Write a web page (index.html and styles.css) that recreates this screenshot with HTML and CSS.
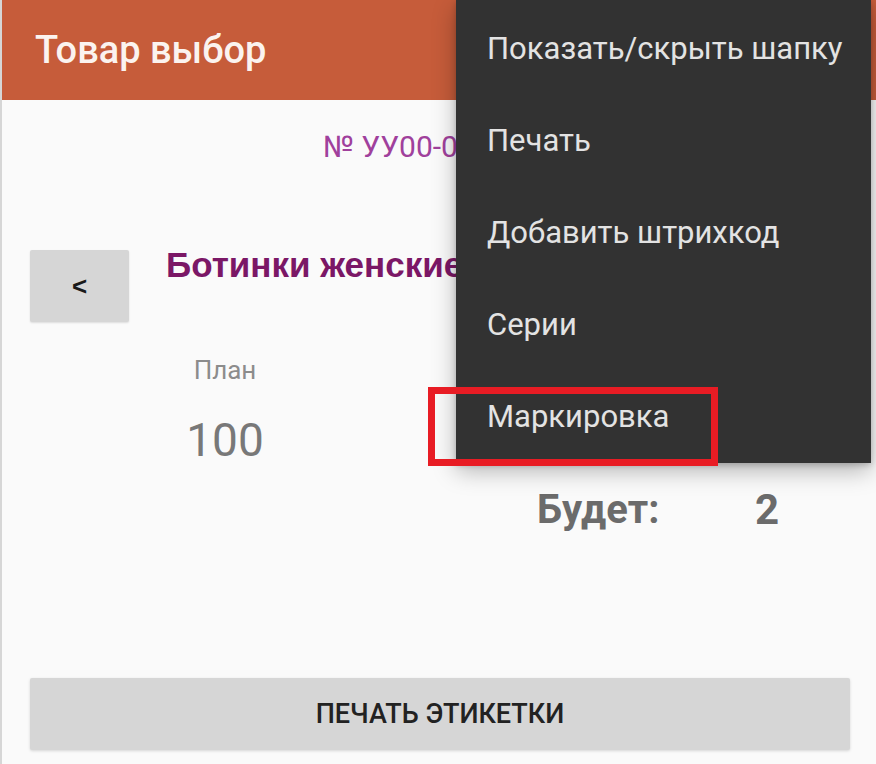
FILE: index.html
```html
<!DOCTYPE html>
<html>
  <head>
    <title>Товар выбор</title>
    <link rel="stylesheet" href="styles.css">
  </head>
  <body>
    <div class="screen">
      <div class="appbar">
        <span class="appbar-title">Товар выбор</span>
      </div>
      <div class="content">
        <div class="doc-number">№ УУ00-000015 от 12.03.2021</div>
        <div class="product-row">
          <button class="back-btn">&lt;</button>
          <div class="product-name">Ботинки женские зимние</div>
        </div>
        <div class="stats">
          <div class="stat">
            <div class="stat-label">План</div>
            <div class="stat-value">100</div>
          </div>
        </div>
        <div class="total">
          <span class="total-label">Будет:</span>
          <span class="total-value">2</span>
        </div>
        <button class="print-btn">Печать этикетки</button>
      </div>
    </div>

    <!-- overflow menu, opened -->
    <ul class="menu">
      <li>Показать/скрыть шапку</li>
      <li>Печать</li>
      <li>Добавить штрихкод</li>
      <li>Серии</li>
      <li>Маркировка</li>
    </ul>
    <div class="highlight"></div>
  </body>
</html>
```

FILE: styles.css
```css
body {
  margin: 0;
  background: #fafafa;
  font-family: Roboto, "Noto Sans", sans-serif;
  overflow: hidden;
}
.screen {
  height: 764px;
  border-left: 2px solid #d6d6d6;
  display: flex;
  flex-direction: column;
}
.appbar {
  height: 100px;
  background: #c65c3a;
  display: flex;
  align-items: center;
  padding-left: 33px;
}
.appbar-title {
  color: #fbf3ef;
  font-size: 38px;
  font-weight: 500;
  line-height: 38px;
}
.content {
  flex: 1;
  display: flex;
  flex-direction: column;
  padding: 0 26px 0 28px;
}
/* the menu covers the right half, so these rows are clipped at its edge */
.doc-number {
  margin-top: 30px;
  width: 426px;
  padding-left: 293px;
  box-sizing: border-box;
  font-size: 30px;
  line-height: 34px;
  color: #a0409c;
  white-space: nowrap;
  overflow: hidden;
}
.product-row {
  margin-top: 86px;
  display: flex;
  align-items: flex-start;
  gap: 37px;
}
.back-btn {
  width: 99px;
  height: 72px;
  border: none;
  border-radius: 2px;
  background: #d6d6d6;
  font-family: "Liberation Sans", Arial, sans-serif;
  font-weight: bold;
  font-size: 26px;
  color: #1a1a1a;
  padding: 0;
  box-shadow: 0 1px 2px rgba(0,0,0,0.12);
}
.product-name {
  margin-top: -4px;
  width: 290px;
  font-family: "Liberation Sans", Arial, sans-serif;
  font-weight: bold;
  font-size: 35px;
  line-height: 38px;
  color: #7b1766;
  white-space: nowrap;
  overflow: hidden;
}
.stats {
  margin-top: 33px;
  display: flex;
}
.stat {
  width: 196px;
  margin-left: 97px;
  text-align: center;
}
.stat-label {
  font-size: 26px;
  line-height: 30px;
  color: #8c8c8c;
}
.stat-value {
  margin-top: 28px;
  font-size: 46px;
  line-height: 54px;
  color: #787878;
}
.total {
  margin-top: 21px;
  margin-left: 507px;
  display: flex;
  font-weight: bold;
  color: #6b6b6b;
  line-height: 44px;
}
.total-label {
  width: 218px;
  font-size: 40px;
}
.total-value {
  font-size: 42px;
}
.print-btn {
  margin-top: auto;
  margin-bottom: 14px;
  height: 72px;
  border: none;
  border-radius: 2px;
  background: #d6d6d6;
  box-shadow: 0 1px 3px rgba(0,0,0,0.15);
  font-family: Roboto, sans-serif;
  font-weight: 500;
  font-size: 27px;
  text-transform: uppercase;
  color: #222;
}
.menu {
  position: absolute;
  left: 456px;
  top: 0;
  width: 415px;
  height: 463px;
  margin: 0;
  padding: 2px 0 0 0;
  box-sizing: border-box;
  list-style: none;
  background: #323232;
  box-shadow: 0 8px 22px rgba(0,0,0,0.28), 0 2px 6px rgba(0,0,0,0.2);
}
.menu li {
  height: 92px;
  display: flex;
  align-items: center;
  padding-left: 31px;
  font-size: 31px;
  color: #e3e3e3;
  white-space: nowrap;
}
.highlight {
  position: absolute;
  left: 428px;
  top: 387px;
  width: 290px;
  height: 79px;
  box-sizing: border-box;
  border: 7px solid #e81c24;
}
```
